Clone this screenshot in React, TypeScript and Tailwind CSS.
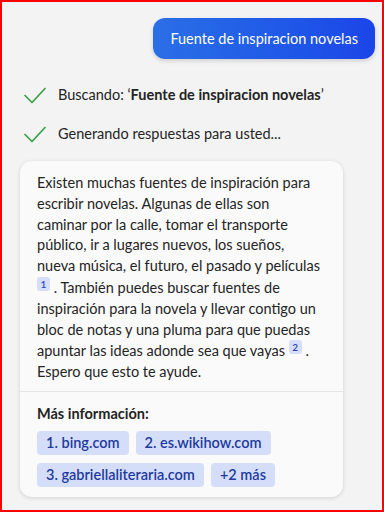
const SOURCES = ['1. bing.com', '2. es.wikihow.com', '3. gabriellaliteraria.com', '+2 más'];

function Cite({ n }: { n: number }) {
  return (
    <span className="inline-flex items-center justify-center w-[13px] h-[14px] rounded-[3px] bg-[#d6def9] text-[#2b45b8] text-[10px] font-semibold leading-none align-[5px]">
      {n}
    </span>
  );
}

function CheckMark() {
  return (
    <svg width="22" height="17" viewBox="0 0 22 17" fill="none" className="shrink-0">
      <polyline points="1,8.5 8,15.5 21,1.5" stroke="#3a9f48" strokeWidth="1.7" strokeLinecap="round" strokeLinejoin="round" />
    </svg>
  );
}

function Step({ children }: { children: React.ReactNode }) {
  return (
    <div className="flex items-center gap-[12px] pl-[22px] h-[20px]">
      <CheckMark />
      <span className="text-[14.5px] leading-[20px] text-[#242424]">{children}</span>
    </div>
  );
}

export default function App() {
  return (
    <div
      className="w-[384px] h-[512px] bg-[#f3f3f3] border-2 border-[#ff0000] overflow-hidden"
      style={{ fontFamily: 'Lato, sans-serif' }}
    >
      {/* User prompt */}
      <div className="flex justify-end pt-[16px] pr-[7px]">
        <div className="h-[41px] px-[17px] flex items-center rounded-[12px] bg-gradient-to-r from-[#2b6fe6] to-[#1c45e8] text-white text-[14.5px] shadow-[0_2px_4px_rgba(0,0,0,0.15)]">
          Fuente de inspiracion novelas
        </div>
      </div>

      {/* Progress */}
      <div className="mt-[26px] space-y-[19px]">
        <Step>
          Buscando: ‘<span className="font-bold">Fuente de inspiracion novelas</span>’
        </Step>
        <Step>Generando respuestas para usted...</Step>
      </div>

      {/* Answer card */}
      <div className="mt-[17px] ml-[18px] w-[323px] bg-[#fafafa] rounded-[12px] shadow-[0_1px_4px_rgba(0,0,0,0.14)]">
        <div className="px-[17px] pt-[12px] pb-[8px] text-[14.5px] leading-[20.8px] text-[#242424] whitespace-nowrap">
          Existen muchas fuentes de inspiración para<br />
          escribir novelas. Algunas de ellas son<br />
          caminar por la calle, tomar el transporte<br />
          público, ir a lugares nuevos, los sueños,<br />
          nueva música, el futuro, el pasado y películas<br />
          <Cite n={1} /> . También puedes buscar fuentes de<br />
          inspiración para la novela y llevar contigo un<br />
          bloc de notas y una pluma para que puedas<br />
          apuntar las ideas adonde sea que vayas <Cite n={2} /> .<br />
          Espero que esto te ayude.
        </div>
        <div className="border-t border-[#e6e6e6] px-[17px] pt-[12px] pb-[10px]">
          <p className="text-[14.5px] leading-[20px] font-bold text-[#242424] mb-[7px]">Más información:</p>
          <div className="flex flex-wrap gap-x-[7px] gap-y-[8px]">
            {SOURCES.map((s) => (
              <span
                key={s}
                className="h-[24px] px-[9px] flex items-center rounded-[4px] bg-[#d4def9] text-[#1f3a9e] text-[14.5px] font-semibold"
              >
                {s}
              </span>
            ))}
          </div>
        </div>
      </div>
    </div>
  );
}
